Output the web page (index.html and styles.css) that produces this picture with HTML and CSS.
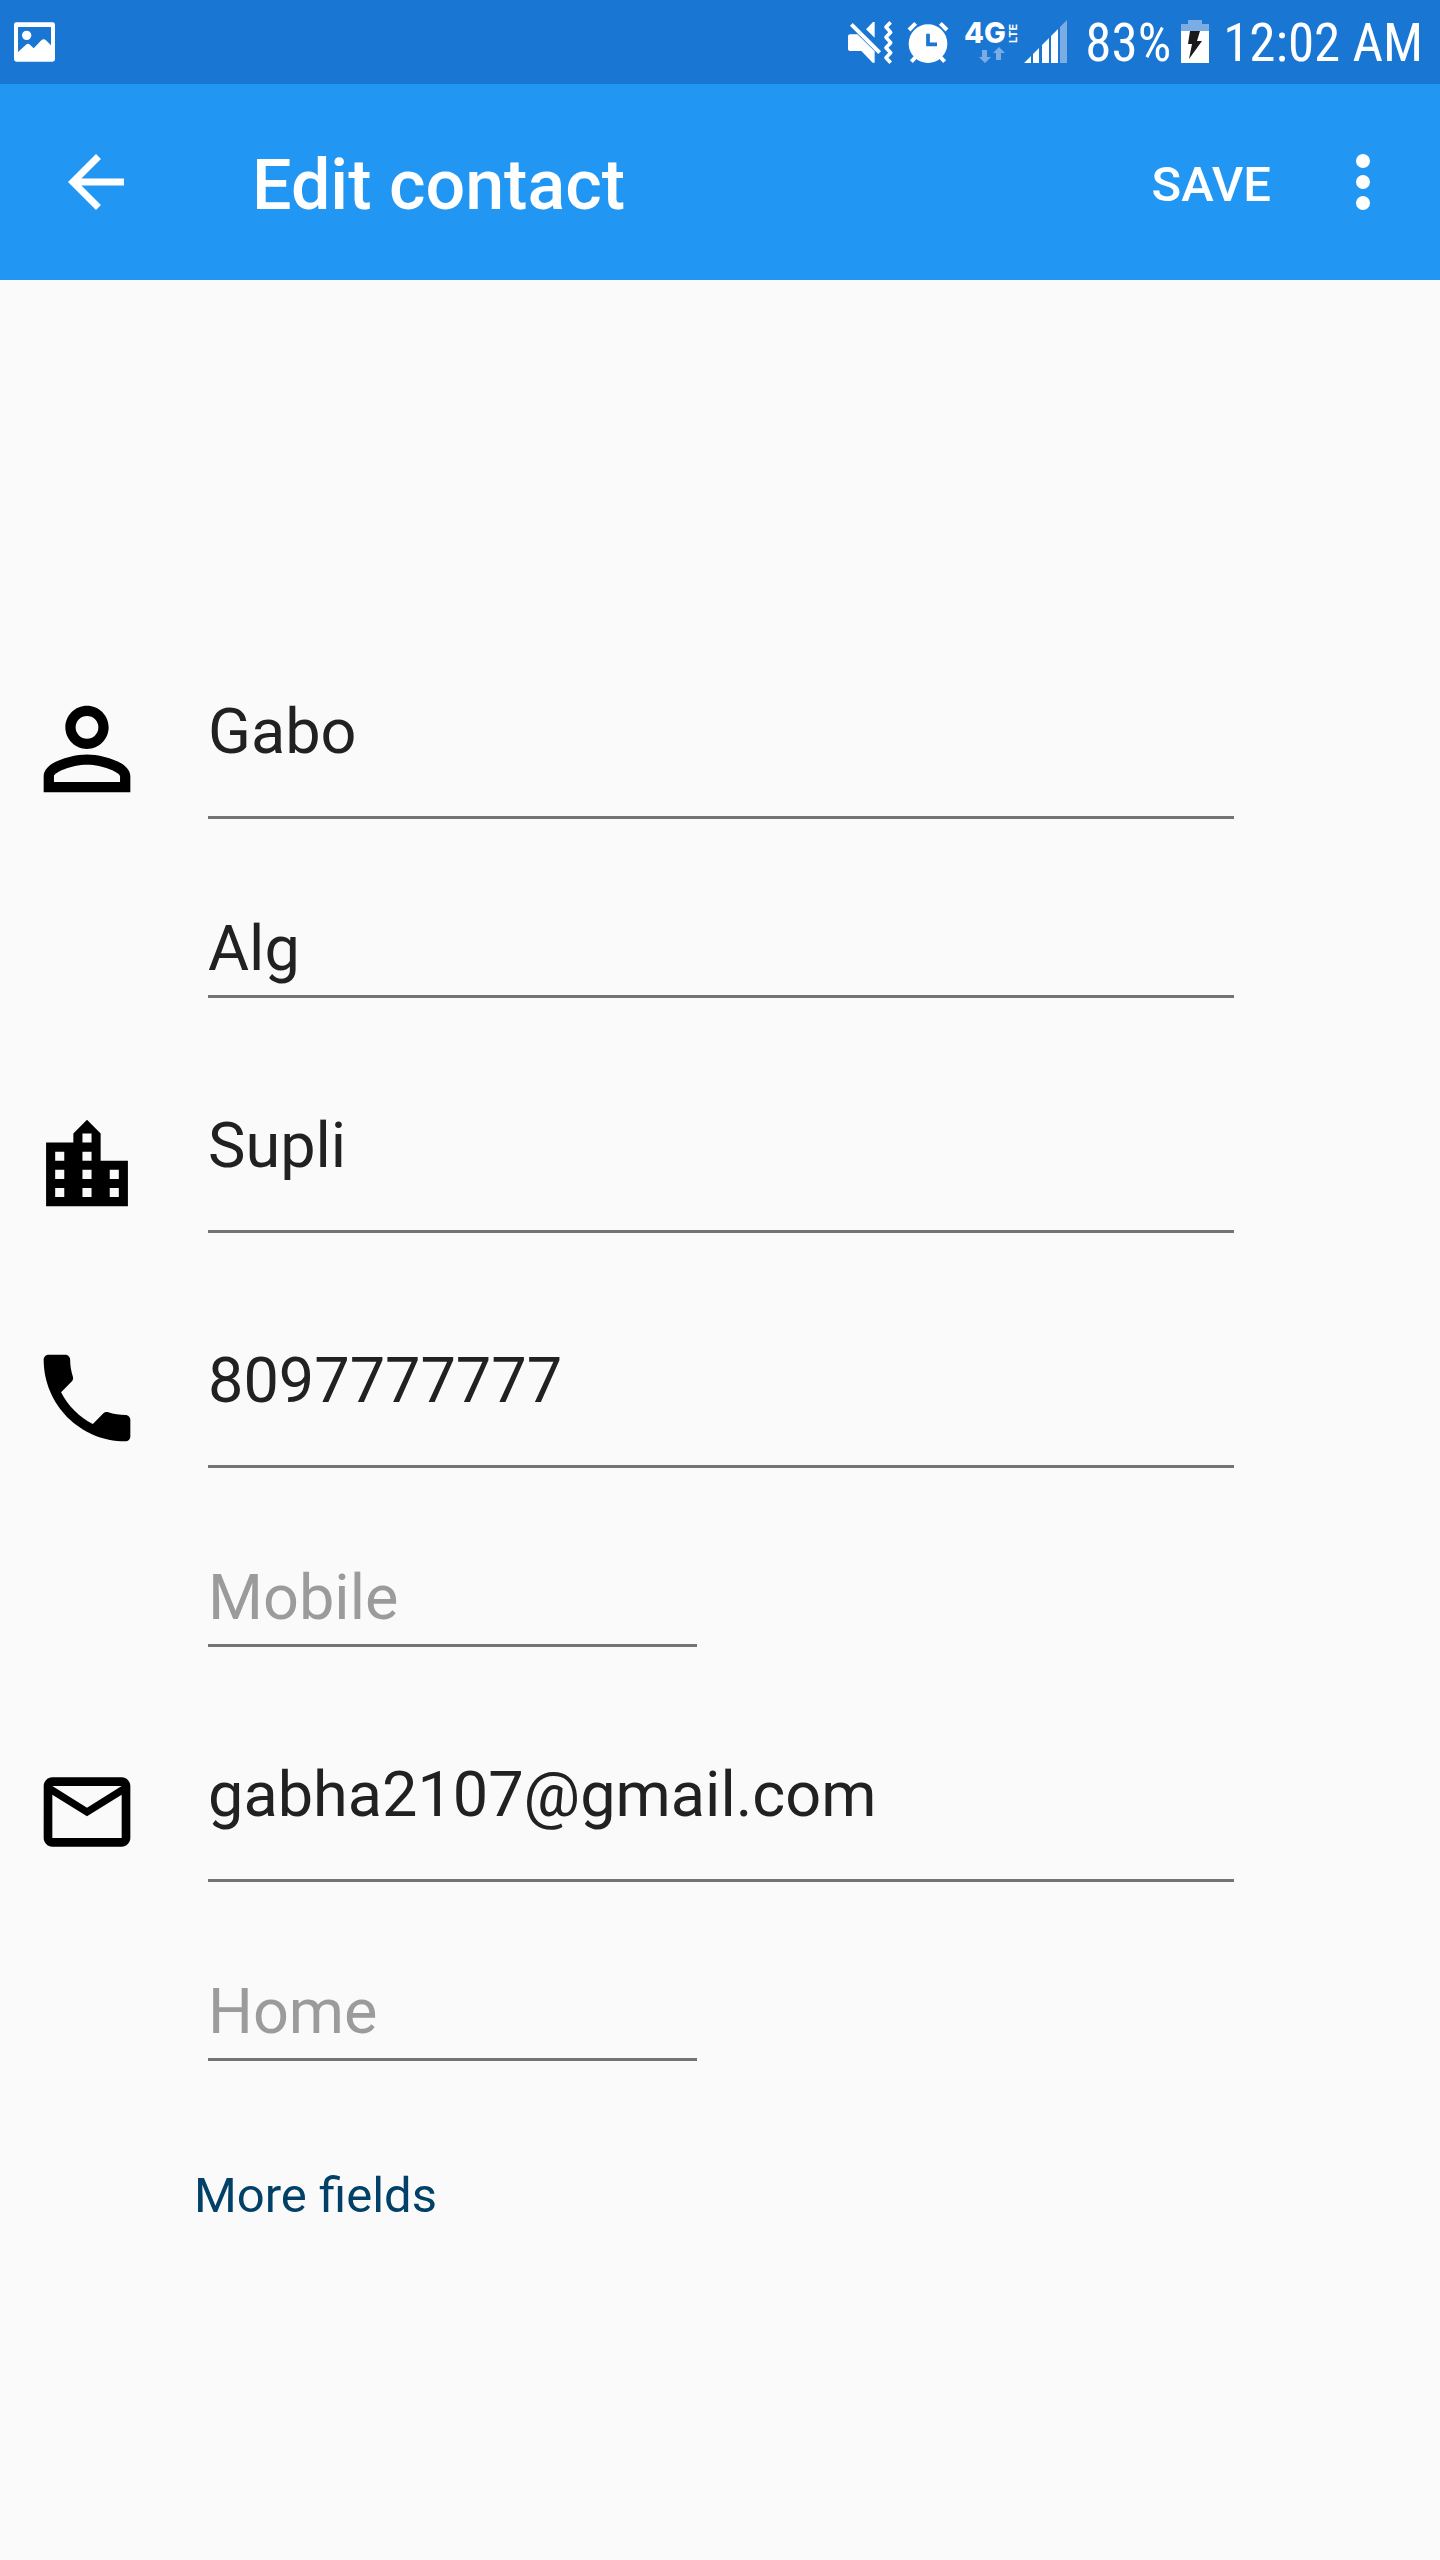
FILE: index.html
```html
<!DOCTYPE html>
<html lang="en">
<head>
<meta charset="utf-8">
<meta name="viewport" content="width=device-width, initial-scale=1">
<title>Edit contact</title>
<link rel="stylesheet" href="styles.css">
</head>
<body>
<div class="status-bar">
  <svg class="status-icon" width="41" height="44" viewBox="42 60 123 132" role="img" aria-label="Picture saved">
    <path fill="#fff" fill-rule="evenodd" d="M49 67H158Q165 67 165 74V178Q165 185 158 185H49Q42 185 42 178V74Q42 67 49 67ZM54 81V156L78 134Q84 129 90 134L101 145L124 121Q131 115 138 121L153 136V81Z"/>
    <circle cx="80" cy="106" r="14" fill="#fff"/>
  </svg>
  <div class="status-group">
    <svg class="status-icon" width="45" height="44" viewBox="54 60 135 132" role="img" aria-label="Vibrate">
      <path fill="#fff" d="M60 103H82L134 154V188H128L94 153H60Q54 153 54 147V109Q54 103 60 103ZM108 88L129 66H134V113Z"/>
      <path d="M64 73L149 158" fill="none" stroke="#fff" stroke-width="12"/>
      <path d="M182 67L168 81L182 97L168 112L182 128L168 143L182 158L168 173L182 188" fill="none" stroke="#fff" stroke-width="11" stroke-linejoin="round"/>
    </svg>
    <svg class="status-icon" width="42" height="44" viewBox="231 60 126 132" role="img" aria-label="Alarm set">
      <circle cx="294" cy="131" r="58" fill="#fff"/>
      <path d="M237 90L257 70M351 90L331 70M260 168L244 185M328 168L344 185" fill="none" stroke="#fff" stroke-width="12"/>
      <path d="M294 101V133H321" fill="none" stroke="#1976d2" stroke-width="11"/>
    </svg>
    <svg class="status-icon" width="104" height="44" viewBox="0 0 104 44" role="img" aria-label="4G LTE signal">
      <text class="network-type" x="1" y="23">4G</text>
      <text class="network-lte" transform="rotate(-90 54 23)" x="54" y="23">LTE</text>
      <path fill="#7bade4" d="M19 30h5v7h4l-6 6-6-6h3zM33 40h5v-7h4l-6-6-6 6h3z"/>
      <path fill="#fff" d="M61 43l7-7v7zM70 34l6-6v15h-6zM79 25l7-7v25h-7zM88 16l7-7v34h-7z"/>
      <path fill="#7bade4" d="M97 7l7-7v43h-7z"/>
    </svg>
    <span class="status-text battery-level">83%</span>
    <svg class="status-icon" width="28" height="44" viewBox="0 0 28 44" role="img" aria-label="Charging">
      <path fill="#7bade4" d="M7 0h14v4h7v7H0V4h7z"/>
      <path fill="#fff" d="M0 11h28v32H0z"/>
      <path fill="#1a1a1a" d="M9 11h10l-3 10h5L8 39l3-15H7z"/>
    </svg>
    <span class="status-text">12:02 AM</span>
  </div>
</div>
<header class="app-bar">
  <button class="icon-button" type="button" aria-label="Back">
    <svg width="84" height="84" viewBox="0 0 24 24"><path fill="#fff" d="M20 11H7.830l5.590-5.590L12 4l-8 8 8 8 1.410-1.410L7.830 13H20v-2z"/></svg>
  </button>
  <h1 class="app-title">Edit contact</h1>
  <button class="save-button" type="button">SAVE</button>
  <button class="icon-button" type="button" aria-label="More options">
    <svg width="84" height="84" viewBox="0 0 24 24"><path fill="#fff" d="M12 8a2 2 0 1 0 0-4 2 2 0 0 0 0 4zm0 2a2 2 0 1 0 0 4 2 2 0 0 0 0-4zm0 6a2 2 0 1 0 0 4 2 2 0 0 0 0-4z"/></svg>
  </button>
</header>
<main>
  <form class="contact-form">
    <div class="field-group">
      <svg class="field-icon" viewBox="0 0 24 24" aria-hidden="true"><path d="M12 5.900a2.100 2.100 0 1 1 0 4.200 2.100 2.100 0 0 1 0-4.200m0 9c2.970 0 6.100 1.460 6.100 2.100v1.100H5.900V17c0-.640 3.130-2.100 6.100-2.100M12 4C9.790 4 8 5.790 8 8s1.790 4 4 4 4-1.790 4-4-1.790-4-4-4zm0 9c-2.670 0-8 1.340-8 4v3h16v-3c0-2.660-5.330-4-8-4z"/></svg>
      <div class="fields">
        <input class="field field-main" type="text" value="Gabo" aria-label="First name">
        <input class="field" type="text" value="Alg" aria-label="Last name">
      </div>
    </div>
    <div class="field-group">
      <svg class="field-icon" viewBox="-2.300 -2.800 28.600 28.600" aria-hidden="true"><path d="M15 11V5l-3-3-3 3v2H3v14h18V11h-6zm-8 8H5v-2h2v2zm0-4H5v-2h2v2zm0-4H5V9h2v2zm6 8h-2v-2h2v2zm0-4h-2v-2h2v2zm0-4h-2V9h2v2zm0-4h-2V5h2v2zm6 12h-2v-2h2v2zm0-4h-2v-2h2v2z"/></svg>
      <div class="fields">
        <input class="field field-main" type="text" value="Supli" aria-label="Company">
      </div>
    </div>
    <div class="field-group">
      <svg class="field-icon" viewBox="-1.500 -1.500 27 27" aria-hidden="true"><path d="M6.620 10.790c1.440 2.830 3.760 5.140 6.590 6.590l2.200-2.200c.270-.270.670-.360 1.020-.240 1.120.370 2.330.570 3.570.570.550 0 1 .450 1 1V20c0 .550-.450 1-1 1-9.390 0-17-7.610-17-17 0-.550.450-1 1-1h3.500c.550 0 1 .450 1 1 0 1.250.200 2.450.570 3.570.110.350.030.740-.250 1.020l-2.200 2.200z"/></svg>
      <div class="fields">
        <input class="field field-main" type="tel" value="8097777777" aria-label="Phone">
        <input class="field field-short" type="text" placeholder="Mobile" aria-label="Phone label">
      </div>
    </div>
    <div class="field-group">
      <svg class="field-icon" viewBox="-3 -3 30 30" aria-hidden="true"><path d="M20 4H4c-1.100 0-1.990.900-1.990 2L2 18c0 1.100.900 2 2 2h16c1.100 0 2-.900 2-2V6c0-1.100-.900-2-2-2zm0 14H4V8l8 5 8-5v10zm-8-7L4 6h16l-8 5z"/></svg>
      <div class="fields">
        <input class="field field-main" type="email" value="gabha2107@gmail.com" aria-label="Email">
        <input class="field field-short" type="text" placeholder="Home" aria-label="Email label">
      </div>
    </div>
    <button class="more-button" type="button">More fields</button>
  </form>
</main>
</body>
</html>
```
FILE: styles.css
```css
* {
  box-sizing: border-box;
}

body {
  margin: 0;
  min-height: 100vh;
  background: #fafafa;
  color: #212121;
  font-family: Roboto, "Noto Sans", sans-serif;
}

button {
  padding: 0;
  border: 0;
  background: none;
  font-family: inherit;
  cursor: pointer;
}

svg {
  display: block;
  flex: none;
  overflow: visible;
}

.status-bar {
  display: flex;
  align-items: center;
  justify-content: space-between;
  height: 84px;
  padding: 0 17px 0 14px;
  background: #1976d2;
  color: #fff;
}

.status-group {
  display: flex;
  align-items: center;
  gap: 14px;
}

.status-text {
  padding-top: 2px;
  font-family: "Roboto Condensed", Roboto, sans-serif;
  font-size: 53px;
  line-height: 64px;
  white-space: nowrap;
}

.battery-level {
  margin: 0 -4px 0 4px;
}

.network-type {
  fill: #fff;
  font: 800 29px Inter, sans-serif;
}

.network-lte {
  fill: #fff;
  font: 700 11px Inter, sans-serif;
}

.app-bar {
  display: flex;
  align-items: center;
  height: 196px;
  padding: 0 35px 0 54px;
  background: #2196f3;
  color: #fff;
}

.app-title {
  flex: 1;
  margin: 0;
  padding: 6px 0 0 114px;
  font-size: 70px;
  font-weight: 500;
  line-height: 82px;
}

.save-button {
  margin-right: 50px;
  padding-top: 6px;
  color: #fff;
  font-size: 49px;
  font-weight: 500;
  line-height: 58px;
}

.contact-form {
  display: flex;
  flex-direction: column;
  align-items: stretch;
  gap: 100px;
  padding: 404px 206px 100px 22px;
}

.field-group {
  display: flex;
  align-items: flex-start;
  gap: 56px;
}

.field-icon {
  width: 130px;
  height: 130px;
}

.fields {
  display: flex;
  flex: 1;
  flex-direction: column;
  gap: 92px;
  min-width: 0;
  padding-top: 11px;
}

.field {
  width: 100%;
  height: 87px;
  padding: 0 0 10px;
  border: 0;
  border-bottom: 3px solid #737373;
  border-radius: 0;
  outline: 0;
  background: none;
  color: #212121;
  font-family: inherit;
  font-size: 63px;
  line-height: 74px;
}

.field-main {
  height: 124px;
  padding-bottom: 49px;
}

.field-short {
  max-width: 489px;
}

.field::placeholder {
  color: #9b9b9b;
  opacity: 1;
}

.more-button {
  align-self: flex-start;
  margin: 6px 0 0 172px;
  color: #014067;
  font-size: 49px;
  line-height: 58px;
}
```
